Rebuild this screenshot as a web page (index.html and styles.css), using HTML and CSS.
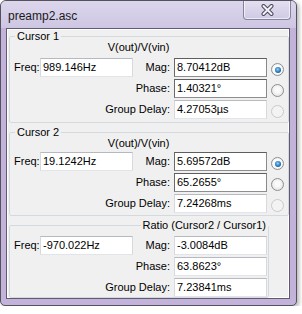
FILE: index.html
```html
<!DOCTYPE html>
<html lang="en">
  <head>
    <meta charset="UTF-8" />
    <meta name="viewport" content="width=device-width, initial-scale=1.0" />
    <title>preamp2.asc</title>
    <link rel="stylesheet" href="styles.css">
  </head>
  <body>
    <main class="window">
      <header class="titlebar">
        <span class="title">preamp2.asc</span>
        <button class="close" aria-label="Close">
          <svg width="13" height="12" viewBox="0 0 13 12">
            <path d="M2.5 2 L10.5 10 M10.5 2 L2.5 10" stroke="#4b4a5c" stroke-width="4" stroke-linecap="round" />
            <path d="M2.5 2 L10.5 10 M10.5 2 L2.5 10" stroke="#f2f2f6" stroke-width="2" stroke-linecap="round" />
          </svg>
        </button>
      </header>

      <section class="client">
        <fieldset class="group cursor1">
          <legend>Cursor 1</legend>
          <div class="grid">
            <div class="expr">V(out)/V(vin)</div>
            <span class="lbl-left">Freq:</span>
            <div class="field">989.146Hz</div>
            <span class="lbl">Mag:</span>
            <div class="field active">8.70412dB</div>
            <span class="radio checked"></span>
            <span class="lbl wide">Phase:</span>
            <div class="field active">1.40321°</div>
            <span class="radio"></span>
            <span class="lbl wide">Group Delay:</span>
            <div class="field">4.27053µs</div>
            <span class="radio disabled"></span>
          </div>
        </fieldset>

        <fieldset class="group cursor2">
          <legend>Cursor 2</legend>
          <div class="grid">
            <div class="expr">V(out)/V(vin)</div>
            <span class="lbl-left">Freq:</span>
            <div class="field">19.1242Hz</div>
            <span class="lbl">Mag:</span>
            <div class="field active">5.69572dB</div>
            <span class="radio checked"></span>
            <span class="lbl wide">Phase:</span>
            <div class="field active">65.2655°</div>
            <span class="radio"></span>
            <span class="lbl wide">Group Delay:</span>
            <div class="field">7.24268ms</div>
            <span class="radio disabled"></span>
          </div>
        </fieldset>

        <fieldset class="group ratio">
          <legend>Ratio (Cursor2 / Cursor1)</legend>
          <div class="grid">
            <span class="lbl-left">Freq:</span>
            <div class="field">-970.022Hz</div>
            <span class="lbl">Mag:</span>
            <div class="field">-3.0084dB</div>
            <span class="lbl wide">Phase:</span>
            <div class="field">63.8623°</div>
            <span class="lbl wide">Group Delay:</span>
            <div class="field">7.23841ms</div>
          </div>
        </fieldset>
      </section>
    </main>
  </body>
</html>
```

FILE: styles.css
```css
* {
  box-sizing: border-box;
}

body {
  margin: 0;
  background-color: #fff;
  font-family: "Liberation Sans", Arial, sans-serif;
  font-size: 11px;
  color: #000;
}

.window {
  width: 297px;
  height: 306px;
  border: 1px solid #55525f;
  border-radius: 6px 6px 5px 5px;
  background-color: #c3b3da;
  box-shadow: 2px 2px 4px rgba(0, 0, 0, 0.3);
  overflow: hidden;
}

.titlebar {
  display: flex;
  align-items: flex-start;
  height: 27px;
  background: linear-gradient(#dcd6ec, #cec6e3);
}

.title {
  padding: 8px 0 0 7px;
  font-size: 12px;
  line-height: 14px;
  color: #1a1a1a;
}

.close {
  display: flex;
  align-items: center;
  justify-content: center;
  width: 48px;
  height: 19px;
  margin-left: auto;
  margin-right: 5px;
  padding: 0;
  border: 1px solid #85839a;
  border-top: none;
  border-radius: 0 0 4px 4px;
  background: linear-gradient(#e4dff0, #d0c9e4);
  box-shadow: inset 1px 0 0 rgba(255, 255, 255, 0.6), inset -1px -1px 0 rgba(255, 255, 255, 0.6);
}

.client {
  height: 271px;
  margin: 0 6px 0 5px;
  border: 1px solid #5f5c6e;
  background-color: #f0f0f0;
  box-shadow: inset 1px 1px 0 #fff, inset -1px -1px 0 #fff;
  overflow: hidden;
  padding-top: 1px;
}

.group {
  margin: 0 0 0 2px;
  padding: 0;
  border: 1px solid #d3dadf;
  border-radius: 2px;
}

.group legend {
  margin-left: 5px;
  padding: 0 2px;
  line-height: 13px;
}

.cursor1 {
  width: 279px;
  padding-bottom: 3px;
}

.cursor2 {
  width: 279px;
  margin-top: 3px;
  padding-bottom: 2px;
}

.ratio {
  width: 260px;
  margin-top: 3px;
  padding-top: 4px;
}

.ratio legend {
  margin-left: auto;
  margin-right: 0;
}

.grid {
  display: grid;
  grid-template-columns: 30px 93px 41px 93px 21px;
  row-gap: 2px;
}

.ratio .grid {
  grid-template-columns: 30px 93px 41px 93px;
}

.expr {
  grid-column: 1 / 5;
  text-align: center;
  line-height: 13px;
  margin: -2px 0 2px;
}

.cursor2 .expr {
  margin: -2px 0 0;
}

.lbl-left {
  grid-column: 1;
  padding-left: 4px;
  line-height: 19px;
}

.lbl {
  text-align: right;
  padding-right: 4px;
  line-height: 19px;
  white-space: nowrap;
}

.lbl.wide {
  grid-column: 1 / 4;
}

.field {
  height: 19px;
  padding-left: 2px;
  line-height: 17px;
  background-color: #fff;
  border: 1px solid;
  border-color: #b6b9c0 #d6d9de #e1e4e8 #d6d9de;
  white-space: nowrap;
}

.field.active {
  border-color: #5e5e5e #8a8a8a #8e8e8e #6a6a6a;
}

.radio {
  display: flex;
  align-items: center;
  justify-content: center;
  width: 13px;
  height: 13px;
  margin: 5px 0 0 4px;
  border: 1px solid #8e8f8f;
  border-radius: 50%;
  background: radial-gradient(circle at 50% 45%, #fafafa 30%, #d9d9d9 100%);
}

.radio.checked {
  background: radial-gradient(circle, #fdfdfd 50%, #dcdcdc 100%);
}

.radio.checked::after {
  content: "";
  width: 6px;
  height: 6px;
  border-radius: 50%;
  background: radial-gradient(circle at 45% 40%, #8fd6ff, #1d6fb5 60%, #0b4a86);
}

.radio.disabled {
  border-color: #cacaca;
  background: #f3f3f3;
}
```
